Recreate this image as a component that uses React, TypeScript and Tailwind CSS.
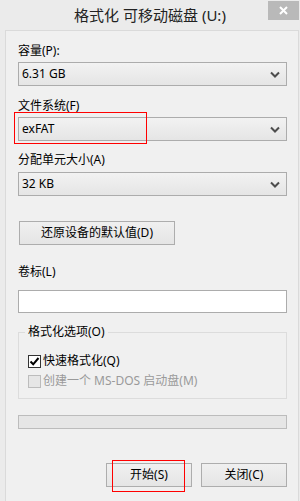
import { ReactNode } from 'react';

const FONT = { fontFamily: '"Noto Sans", "Noto Sans CJK SC", sans-serif' };

function Chevron() {
  return (
    <svg width="10" height="7" viewBox="0 0 10 7" className="shrink-0">
      <path d="M1 1.5 L5 5.5 L9 1.5" fill="none" stroke="#4d4d4d" strokeWidth="2" />
    </svg>
  );
}

function Combo({ value }: { value: string }) {
  return (
    <div className="flex h-[24px] items-center justify-between border border-[#acacac] bg-gradient-to-b from-[#f2f2f2] to-[#e5e5e5] pl-[3px] pr-[6px]">
      <span className="text-[12px] leading-[16px] text-black">{value}</span>
      <Chevron />
    </div>
  );
}

function Label({ children, className = '' }: { children: ReactNode; className?: string }) {
  return <div className={`text-[12px] leading-[16px] text-black ${className}`}>{children}</div>;
}

function Button({ children, className = '' }: { children: ReactNode; className?: string }) {
  return (
    <div
      className={`flex h-[24px] items-center justify-center border border-[#adadad] bg-gradient-to-b from-[#f0f0f0] to-[#e5e5e5] text-[12px] leading-[16px] text-black ${className}`}
    >
      {children}
    </div>
  );
}

export default function App() {
  return (
    <div className="relative flex h-[501px] w-[300px] flex-col overflow-hidden bg-[#ebebeb]" style={FONT}>
      {/* title bar */}
      <div className="relative flex h-[30px] shrink-0 items-center justify-center">
        <span className="text-[15px] leading-[20px] text-[#222]">格式化 可移动磁盘 (U:)</span>
        <div className="absolute right-[1px] top-[1px] flex h-[19px] w-[31px] items-center justify-center bg-[#b9b9b9]">
          <svg width="9" height="9" viewBox="0 0 9 9">
            <path d="M1 1 L8 8 M8 1 L1 8" stroke="#fff" strokeWidth="2" />
          </svg>
        </div>
      </div>

      {/* dialog body */}
      <div className="ml-[5px] mr-[1px] flex flex-1 flex-col border-l border-r border-t border-[#dadada] bg-[#f0f0f0] pl-[12px] pr-[11px]">
        <Label className="mt-[12px]">容量(P):</Label>
        <div className="mt-[3px]">
          <Combo value="6.31 GB" />
        </div>

        <Label className="mt-[12px]">文件系统(F)</Label>
        <div className="mt-[3px]">
          <Combo value="exFAT" />
        </div>

        <Label className="mt-[11px]">分配单元大小(A)</Label>
        <div className="mt-[4px]">
          <Combo value="32 KB" />
        </div>

        <Button className="ml-[1px] mt-[25px] w-[156px]">还原设备的默认值(D)</Button>

        <Label className="mt-[19px]">卷标(L)</Label>
        <div className="mt-[10px] h-[23px] border border-[#acacac] bg-white" />

        {/* format options group */}
        <div className="relative mt-[19px] h-[67px] border border-[#dcdcdc] px-[9px] pt-[20px]">
          <div className="absolute left-[6px] top-[-9px] bg-[#f0f0f0] px-[3px] text-[12px] leading-[16px] text-black">
            格式化选项(O)
          </div>
          <div className="flex items-center gap-[2px]">
            <div className="flex h-[13px] w-[13px] items-center justify-center border border-[#333] bg-white">
              <svg width="11" height="11" viewBox="0 0 11 11">
                <path d="M1.5 5.5 L4.2 8.3 L9.5 2" fill="none" stroke="#000" strokeWidth="2" />
              </svg>
            </div>
            <span className="text-[12px] leading-[16px] text-black">快速格式化(Q)</span>
          </div>
          <div className="mt-[4px] flex items-center gap-[2px]">
            <div className="h-[13px] w-[13px] border border-[#bcbcbc] bg-[#e6e6e6]" />
            <span className="text-[12px] leading-[16px] text-[#9a9a9a]">创建一个 MS-DOS 启动盘(M)</span>
          </div>
        </div>

        {/* progress bar */}
        <div className="mt-[16px] h-[14px] border border-[#bcbcbc] bg-[#e6e6e6]" />

        <div className="mt-[34px] flex justify-end gap-[9px]">
          <Button className="w-[86px]">开始(S)</Button>
          <Button className="w-[86px]">关闭(C)</Button>
        </div>
      </div>

      {/* red highlight annotations */}
      <div className="pointer-events-none absolute left-[14px] top-[112px] h-[32px] w-[133px] border border-[#ff0000]" />
      <div className="pointer-events-none absolute left-[112px] top-[460px] h-[32px] w-[73px] border border-[#ff0000]" />
    </div>
  );
}
